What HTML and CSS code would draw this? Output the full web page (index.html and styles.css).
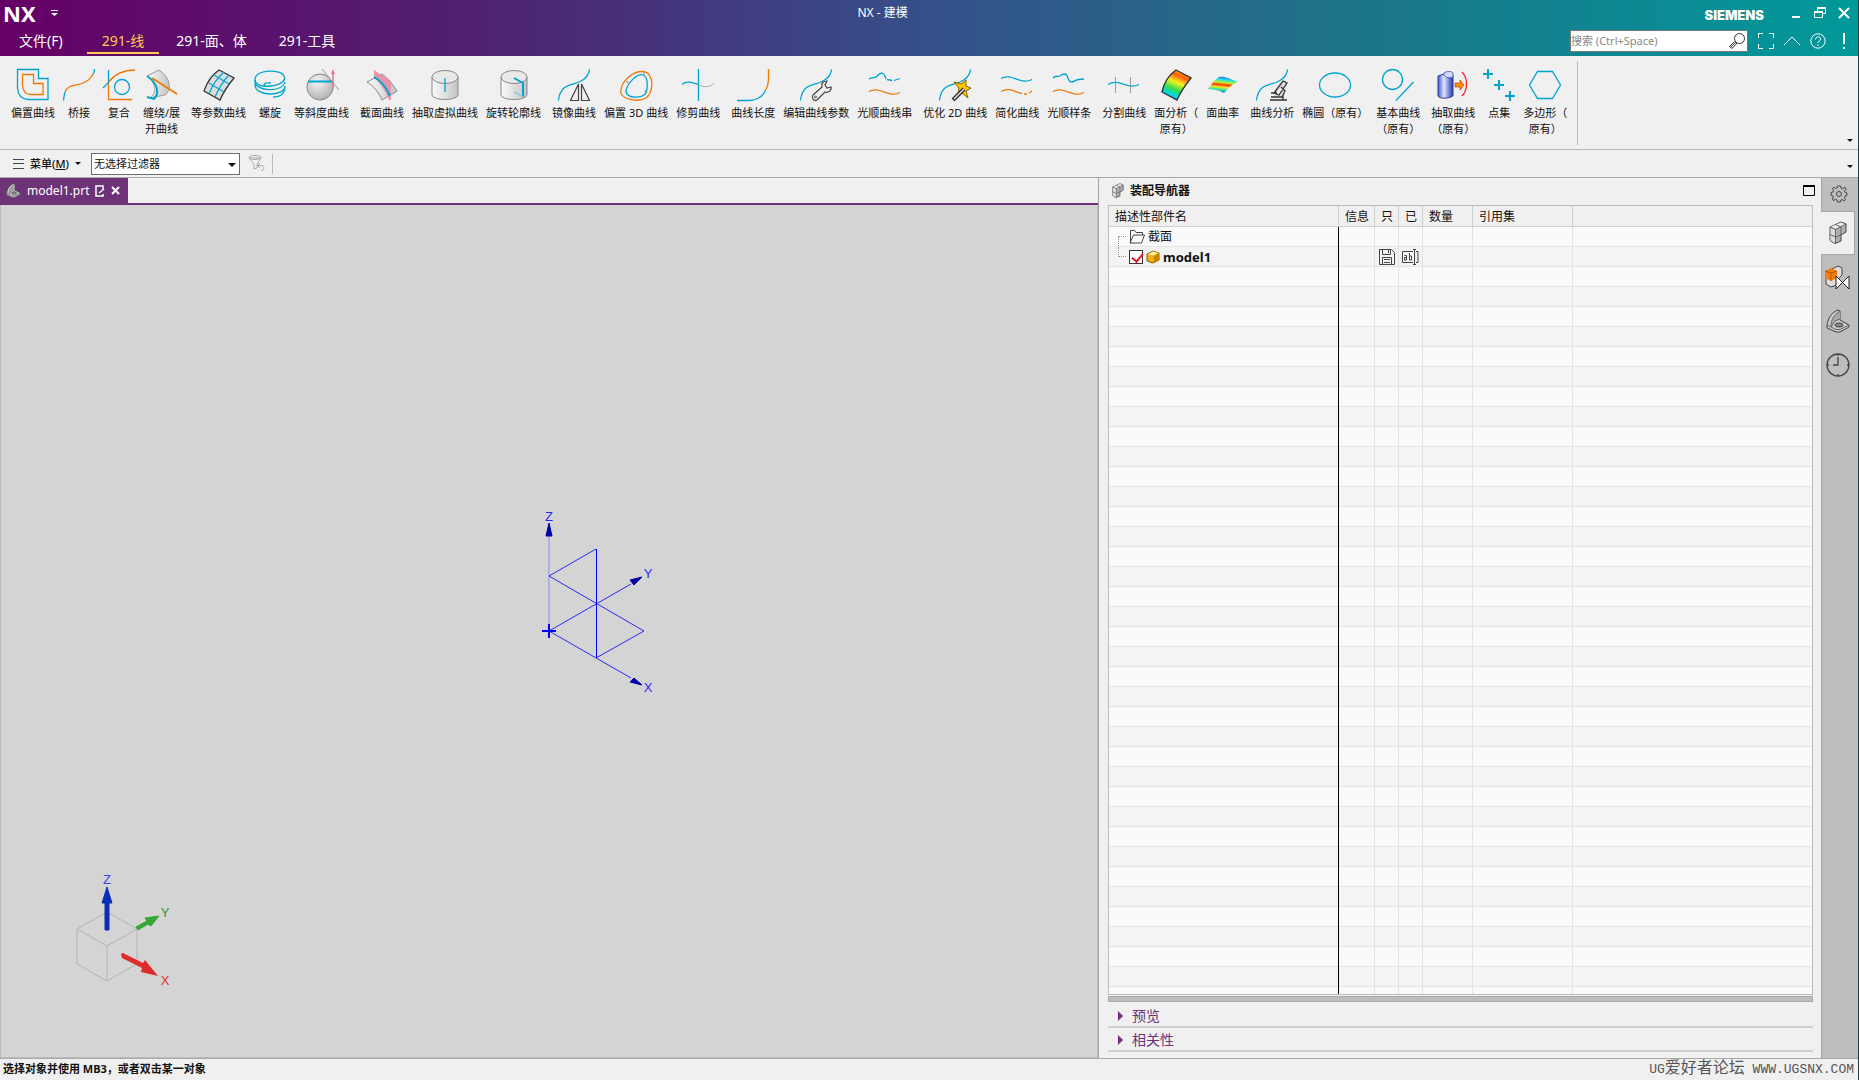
FILE: index.html
```html
<!DOCTYPE html>
<html lang="zh-CN">
<head>
    <meta charset="UTF-8">
    <meta name="viewport" content="width=device-width, initial-scale=1.0">
    <title>NX - 建模</title>
    <link rel="stylesheet" href="styles.css">
</head>
<body>
    <!-- shared shapes -->
    <svg class="defs" width="0" height="0" aria-hidden="true">
        <defs>
            <linearGradient id="metal"><stop offset="0" stop-color="#fafafa"/><stop offset="1" stop-color="#c4c4c4"/></linearGradient>
            <radialGradient id="ball" cx=".4" cy=".3" r=".8"><stop offset="0" stop-color="#f6f6f6"/><stop offset="1" stop-color="#aaa"/></radialGradient>
            <linearGradient id="rainbow" x1=".7" y1="0" x2=".3" y2="1"><stop offset="0" stop-color="#ffd800"/><stop offset=".2" stop-color="#ff5a10"/><stop offset=".42" stop-color="#f6f020"/><stop offset=".65" stop-color="#35dc50"/><stop offset=".85" stop-color="#00d8f0"/><stop offset="1" stop-color="#1060ff"/></linearGradient>
            <linearGradient id="rainbow2" x1=".6" y1="0" x2=".4" y2="1"><stop offset="0" stop-color="#2060ff"/><stop offset=".2" stop-color="#20e8e0"/><stop offset=".36" stop-color="#c0f020"/><stop offset=".5" stop-color="#ff3010"/><stop offset=".64" stop-color="#f0e820"/><stop offset=".82" stop-color="#20e0b0"/><stop offset="1" stop-color="#2050ff"/></linearGradient>
            <linearGradient id="tube"><stop offset="0" stop-color="#4458d0"/><stop offset=".4" stop-color="#dfe6ff"/><stop offset="1" stop-color="#2434b0"/></linearGradient>
            <symbol id="scurve" viewBox="0 0 32 32"><path class="blue" d="M.5 31.5C2 15 14 16 21 13S31 6 31.5.5"/></symbol>
            <symbol id="bracket" viewBox="0 0 24 24">
                <path d="M1 16C2 9 6 3 12 1l2 1v9l9 5v2l-9 5h-4l-9-4z" fill="#c9c9c9" stroke="#444"/>
                <path d="M5 17C5 11 8 6 14 2v8l-5 2z" fill="#a9a9a9"/>
                <path d="M1 16l4 2 4-6 5-2M5 17C5 11 8 6 14 2M23 16l-9 4.500h-4L5 18" fill="none" stroke="#666"/>
                <ellipse cx="13" cy="16" rx="4" ry="2" fill="#888" stroke="#444"/>
            </symbol>
            <symbol id="blocks" viewBox="0 0 18 23">
                <path d="M1 6l11-5 5 2v8l-5 3v6l-6 2.500-5-3z" fill="#b0b0b0" stroke="#444"/>
                <path d="M1.500 6l5 2L16.500 3.500 12 1.500z" fill="#eee"/>
                <path d="M1.500 7L6 8.500V22l-4.500-2.500z" fill="#ddd"/>
                <path d="M1 6l5.500 2.500L17 3M6.500 8v14M12 5.500V14l-5.500 2L1 13.500M6.500 3.500L12 6" fill="none" stroke="#666"/>
            </symbol>
        </defs>
    </svg>

    <header class="titlebar">
        <div class="title-row">
            <div class="brand">NX</div>
            <button class="plain quick" aria-label="快速访问"><svg width="7" height="6"><path d="M0 .5h7" stroke="#fff"/><path d="M0 3h7L3.500 6z" fill="#fff"/></svg></button>
            <h1 class="title">NX - 建模</h1>
            <div class="siemens">SIEMENS</div>
            <div class="window-buttons">
                <button class="plain" aria-label="最小化"><svg width="12" height="12"><path d="M2 10h8" stroke="#fff" stroke-width="2"/></svg></button>
                <button class="plain" aria-label="还原"><svg width="12" height="12" fill="none" stroke="#fff"><path d="M3.500 4V1.500h8v5H9"/><path d="M3 1h9" stroke-width="2"/><path d="M.5 5.500h8v5h-8z"/><path d="M0 5h9" stroke-width="2"/></svg></button>
                <button class="plain" aria-label="关闭"><svg width="12" height="12"><path d="M1 1l10 10M11 1L1 11" stroke="#fff" stroke-width="2"/></svg></button>
            </div>
        </div>
        <div class="menu-row">
            <nav class="menu-tabs">
                <a href="#">文件(F)</a>
                <a href="#" class="active">291-线</a>
                <a href="#">291-面、体</a>
                <a href="#">291-工具</a>
            </nav>
            <div class="search">
                <input type="text" aria-label="搜索" placeholder="搜索 (Ctrl+Space)">
                <svg width="16" height="16" fill="none" stroke="#333"><circle cx="10.500" cy="5.500" r="5"/><path d="M7 9l-5.500 5.500M8 10l-5 5.500-2.500-2L5.500 8.500"/></svg>
            </div>
            <div class="window-tools">
                <button class="plain" aria-label="全屏"><svg width="16" height="16" fill="none" stroke="#fff"><path d="M.5 5V.5H5M11 .5h4.500V5M15.500 11v4.500H11M5 15.500H.5V11"/></svg></button>
                <button class="plain" aria-label="折叠"><svg width="16" height="16" fill="none" stroke="#fff"><path d="M0 12l8-8 8 8"/></svg></button>
                <button class="plain" aria-label="帮助"><svg width="16" height="16" fill="none" stroke="#fff"><circle cx="8" cy="8" r="7.200"/><path d="M5.500 6.500c0-3.500 5-3.500 5-.5 0 2-2.500 2-2.500 4.200M8 11.500V13"/></svg></button>
                <button class="plain" aria-label="提醒"><svg width="4" height="16"><path d="M2 0v11M2 14v2" stroke="#fff" stroke-width="2"/></svg></button>
            </div>
        </div>
    </header>

    <section class="ribbon">
        <div class="group">
            <button class="tool"><svg viewBox="0 0 32 32"><path class="blue" d="M.5.5h21v9h9.500v21H11C4 30 1 26 .5 19z"/><path class="orange" d="M5.500 5.500h11v9H26v11H14c-6 0-8-4-8.500-9z"/></svg>偏置曲线</button>
            <button class="tool"><svg viewBox="0 0 32 32"><path class="orange" d="M2 23c3-8 11-6 18-9 6-2 8-5 10-9"/><path class="blue" d="M.5 31.500C1 28 1 26 2 23M30 5q1.500-2 1.500-5"/></svg>桥接</button>
            <button class="tool"><svg viewBox="0 0 32 32"><path class="orange" d="M5.500 12v18.500H29M5.500 13C12 5 20 1 32 1"/><path class="blue" d="M5.500 1v11M0 19l6-6"/><circle class="blue" cx="19" cy="18" r="7.500"/></svg>复合</button>
            <button class="tool"><svg viewBox="0 0 32 32"><path d="M1 7L13 1c12 8 13 20 6 25L3 29c8-3 8-14-2-22z" fill="url(#metal)" stroke="#999"/><path class="blue thick" d="M1 7c12 8 12 18 7 23l-7-2"/><path class="orange thick" d="M6 9l25 16"/></svg>缠绕/展<br>开曲线</button>
        </div>
        <div class="group">
            <button class="tool"><svg viewBox="0 0 32 32"><path d="M16 1l15 8c-5 6-10 13-14 22L1 22C4 13 9 6 16 1z" fill="#dcdcdc" stroke="#333" stroke-width="1.300"/><path class="blue" d="M21 3C14 9 9 17 6 25M26 6c-6 6-11 15-14 22M11 6l15 9M6 14l15 9"/></svg>等参数曲线</button>
            <button class="tool"><svg viewBox="0 0 32 32"><g class="blue"><path d="M17 14c-9-1-9 4-1 3 12-1 16-6 14-10C27 0 2 0 1 10c-1 11 28 9 30-1"/><path d="M1 11c-2 12 28 13 30 2M1 15c-1 13 30 13 30 2 0 7-4 11-12 11"/></g></svg>螺旋</button>
            <button class="tool"><svg viewBox="0 0 32 32"><circle cx="14" cy="18" r="13" fill="url(#ball)" stroke="#888"/><path class="blue thick" d="M2 12.500h24"/><path d="M16 0l17 21" stroke="#999" fill="none"/><path d="M27 20V4" stroke="#de7890" stroke-width="1.500"/><path d="M27 0l-2 5h4z" fill="#de7890"/></svg>等斜度曲线</button>
        </div>
        <div class="group">
            <button class="tool"><svg viewBox="0 0 32 32"><path d="M1 13L16 5c6 4 11 11 15 17l-15 9C13 24 8 17 1 13z" fill="url(#metal)" stroke="#888"/><path d="M8 1l17 11v19H23C19 21 14 14 8 8z" fill="#e68aa2" opacity=".85"/><path class="blue thick" d="M8 8c7 4 13 12 16 19"/></svg>截面曲线</button>
            <button class="tool"><svg viewBox="0 0 32 32"><path d="M3 8v18c1 6 25 6 26 0V8z" fill="url(#metal)" stroke="#888"/><ellipse cx="16" cy="8" rx="13" ry="6.500" fill="#e9e9e9" stroke="#888"/><path class="blue" d="M16 9v14"/></svg>抽取虚拟曲线</button>
            <button class="tool"><svg viewBox="0 0 32 32"><path d="M3 8v18c1 6 25 6 26 0V8z" fill="url(#metal)" stroke="#888"/><ellipse cx="16" cy="8" rx="13" ry="6.500" fill="#e9e9e9" stroke="#888"/><path class="blue thick" d="M16 9l9 5v14"/><path d="M16 23l9 5" stroke="#8dcbdc" stroke-width="1.500"/></svg>旋转轮廓线</button>
        </div>
        <div class="group">
            <button class="tool"><svg viewBox="0 0 32 32"><use href="#scurve"/><path d="M20.500 15v16.500h-8zM23.500 15v16.500h8z" fill="#eee" stroke="#444" stroke-width="1.200"/></svg>镜像曲线</button>
            <button class="tool"><svg viewBox="0 0 32 32"><path class="orange" d="M1 20C3 11 13 2 23 2.500c12 1 11 23 2 27C18 33-2 31 1 20z"/><path class="blue" d="M6 21C8 14 17 4 23 6c6 2 5 17 1 20-4 3-19 4-18-5z"/><path d="M24 3v3M6 12l3 2M25 21l2 3" stroke="#888"/></svg>偏置 3D 曲线</button>
            <button class="tool"><svg viewBox="0 0 32 32"><path class="blue" d="M16.500 0v32M0 15.500c5-4 10-2 16 0"/><path d="M16 15.500c6 3 11 3 16-1" fill="none" stroke="#aaa"/></svg>修剪曲线</button>
        </div>
        <div class="group">
            <button class="tool"><svg viewBox="0 0 32 32"><path class="blue" d="M0 31.500h11c9 0 15-4 18-11"/><path class="orange" d="M31.500 0v10q0 6-2.500 10.500"/></svg>曲线长度</button>
            <button class="tool"><svg viewBox="0 0 32 32"><use href="#scurve"/><path d="M13 26l9-8c-1-4 1-6 5-6l-2 4 2 3 4-1c1 4-3 6-6 5l-8 8c-3 2-6-2-4-5z" fill="#eee" stroke="#444" stroke-width="1.200"/><circle cx="15.500" cy="28" r="1" fill="none" stroke="#555"/></svg>编辑曲线参数</button>
            <button class="tool"><svg viewBox="0 0 32 32"><path class="blue" d="M0 10c3-2 5-1 7-2s3-4 6-4c3 1 3 4 4 6M18 10.500l5 1M25 11.500l6-2"/><path class="orange" d="M0 22.500c10-6 20 7 31 1"/></svg>光顺曲线串</button>
        </div>
        <div class="group">
            <button class="tool"><svg viewBox="0 0 32 32"><use href="#scurve"/><path d="M15 13l7 2 5-4v6l5 2-5 3 2 7-6-5-4 1 1-6z" fill="#ffc400" stroke="#8a6100"/><path d="M14 31l11-11" stroke="#333" stroke-width="4"/><path d="M15 30l10-10" stroke="#ddd" stroke-width="1.500"/></svg>优化 2D 曲线</button>
            <button class="tool"><svg viewBox="0 0 32 32"><path class="blue" d="M0 9.500c10-6 20 7 31 1"/><path class="orange" d="M0 22.500c9-5 14 1 21 2M23 25h3M28 24l3-2"/></svg>简化曲线</button>
            <button class="tool"><svg viewBox="0 0 32 32"><path class="blue" d="M0 9c3-3 5-1 7-2s2-2 5-2c4 1 2 8 7 8 3 0 2-3 12-3"/><path class="orange" d="M0 22.500c10-6 20 7 31 1"/></svg>光顺样条</button>
        </div>
        <div class="group">
            <button class="tool"><svg viewBox="0 0 32 32"><path class="blue" d="M0 15.500c11-7 19 6 31 0"/><path d="M7.500 8v16M22.500 8v16" stroke="#999"/></svg>分割曲线</button>
            <button class="tool"><svg viewBox="0 0 32 32"><path d="M16 1l15 8c-5 6-10 13-14 22L2 23C4 13 9 6 16 1z" fill="url(#rainbow)" stroke="#333" stroke-width="1.400"/></svg>面分析（<br>原有）</button>
            <button class="tool"><svg viewBox="0 0 32 32"><path d="M12 8c6-1 11 2 19 5-5 1-9 6-14 11-6-3-11-4-16-4 4-5 6-9 11-12z" fill="url(#rainbow2)"/></svg>面曲率</button>
        </div>
        <div class="group">
            <button class="tool"><svg viewBox="0 0 32 32"><use href="#scurve"/><path d="M14 31h17M17 28h9l3-6-4-4M18 24l9-12 4 2-8 12-5-2zM15 24h6M15 28h5M27 31v-5" fill="#ddd" stroke="#333" stroke-width="1.300"/></svg>曲线分析</button>
            <button class="tool"><svg viewBox="0 0 32 32"><ellipse class="blue" cx="16" cy="16" rx="15.500" ry="12"/></svg>椭圆（原有）</button>
            <button class="tool"><svg viewBox="0 0 32 32"><circle class="blue" cx="10.500" cy="10.500" r="10"/><path class="blue" d="M14 31.500L31.500 13"/></svg>基本曲线<br>（原有）</button>
        </div>
        <div class="group">
            <button class="tool"><svg viewBox="0 0 32 32"><path d="M1 7l6-2c1 2 3 3 9 1v21c-5 3-13 3-15 0z" fill="url(#tube)" stroke="#2c3c9c"/><path d="M7 4c2-2 8-2 9 0v4c-4 2-8 0-9-2z" fill="#cfd8ff" stroke="#2c3c9c" stroke-width=".7"/><path d="M18 14h5v-3l4 5-4 5v-3h-5z" fill="#ff8a00" stroke="#b04800" stroke-width=".7"/><path d="M25 3c6 6 6 18 0 24" fill="none" stroke="#f22" stroke-width="1.300"/></svg>抽取曲线<br>（原有）</button>
            <button class="tool"><svg viewBox="0 0 32 32"><path class="cross" d="M0 5h10M5 0v10M11 16h10M16 11v10M22 27h10M27 22v10"/></svg>点集</button>
            <button class="tool"><svg viewBox="0 0 32 32"><path class="blue" d="M8.500 2.500h15l8 13.500-8 13.500h-15L.5 16z"/></svg>多边形（<br>原有）</button>
        </div>
        <div class="divider"></div>
        <button class="plain overflow" aria-label="更多命令"></button>
    </section>

    <section class="toolbar">
        <button class="menu-button"><svg width="11" height="10"><path d="M0 .5h11M0 4.500h11M0 9.500h11" stroke="#444"/></svg><span>菜单(<u>M</u>)</span><i class="caret"></i></button>
        <div class="filter">
            <select aria-label="选择过滤器"><option>无选择过滤器</option></select>
            <i class="caret"></i>
        </div>
        <button class="plain" aria-label="重置过滤器"><svg width="17" height="17" fill="none" stroke="#aaa"><path d="M1 3l5 6v5l3-1V9l4-6z"/><ellipse cx="7" cy="2.500" rx="6" ry="2"/><path d="M12 8l-2.500 2.500L12 13M10 10.500h3c4 0 4 5 0 5"/></svg></button>
        <div class="divider"></div>
        <button class="plain overflow" aria-label="更多工具"></button>
    </section>

    <main class="workspace">
        <section class="document">
            <div class="doc-tabs">
                <div class="doc-tab">
                    <svg width="15" height="15"><use href="#bracket"/></svg>
                    <span>model1.prt</span>
                    <svg width="10" height="12" fill="none" stroke="#fff" stroke-width="1.500"><path d="M8 4V1H1v10h7V9M3 1h4"/><path d="M4 8l5-4"/></svg>
                    <button class="plain" aria-label="关闭标签"><svg width="9" height="9"><path d="M1 1l7 7M8 1L1 8" stroke="#fff" stroke-width="2"/></svg></button>
                </div>
            </div>
            <div class="viewport">
                <!-- datum csys, origin in the middle of the view -->
                <svg class="csys" viewBox="-130 -130 260 260">
                    <g fill="none" stroke="#2a2af5">
                        <path d="M0 0v-96" stroke="#8d8df0"/>
                        <path d="M0 0l82-47M0 0l82 47M0-55l47-27M0-55L95 0 47 27"/>
                        <path d="M47.500-82V27" stroke="#00f"/>
                    </g>
                    <path d="M-7 0H7M0-7V7" stroke="#00f" stroke-width="2"/>
                    <path d="M0-108l3 13h-6zM93-54l-8 8-4-5zM93 54l-8-7-4 4z" fill="#0000a8" stroke="#0000a8"/>
                    <g class="axis-text" fill="#2a2af5"><text x="0" y="-110">Z</text><text x="99" y="-53">Y</text><text x="99" y="61">X</text></g>
                </svg>
                <!-- view triad -->
                <svg class="triad" viewBox="0 0 110 120">
                    <path d="M37 42l30 17v35l-30 17-30-17V59zM7 59l30 17 30-17M37 76v35" fill="none" stroke="#b4b4b4"/>
                    <path d="M35 60V33h-3l5-16 5 16h-3v27z" fill="#0a2fb5" stroke="#0a2fb5"/>
                    <path d="M66 57l11-6-2-3 14-2-8 10-3-2-10 6z" fill="#36a836" stroke="#36a836"/>
                    <path d="M53 83l20 10 2-3 13 16-17-4 1-4-20-10q-2-5 1-5z" fill="#dc2c2c"/>
                    <g class="axis-text"><text x="37" y="14" fill="#4040ff">Z</text><text x="95" y="47" fill="#329832">Y</text><text x="95" y="115" fill="#e03030">X</text></g>
                </svg>
            </div>
        </section>

        <aside class="navigator">
            <div class="panel-head">
                <svg width="12" height="15"><use href="#blocks"/></svg>
                <h2>装配导航器</h2>
                <button class="plain" aria-label="最大化"><svg width="12" height="11"><path d="M.5 1v9.500h11V1" fill="none" stroke="#000"/><path d="M0 1h12" stroke="#000" stroke-width="2"/></svg></button>
            </div>
            <div class="grid">
                <table>
                    <colgroup><col class="c-name"><col class="c-info"><col class="c-flag"><col class="c-flag"><col class="c-count"><col class="c-ref"><col></colgroup>
                    <thead>
                        <tr><th>描述性部件名</th><th>信息</th><th>只</th><th>已</th><th>数量</th><th>引用集</th><th></th></tr>
                    </thead>
                    <tbody id="rows">
                        <tr>
                            <td><div class="node"><i class="branch"></i><svg width="16" height="14" fill="none" stroke="#444"><path d="M1.500 13V.5h4l1.500 2h6.500V5M1 13L4.500 5h11l-3 8z"/></svg><span>截面</span></div></td>
                            <td></td><td></td><td></td><td></td><td></td><td></td>
                        </tr>
                        <tr>
                            <td><div class="node"><i class="branch up"></i><input type="checkbox" checked aria-label="model1"><svg width="14" height="14"><path d="M1 4l6-3 6 2v7l-6 3-6-2z" fill="#f0b010" stroke="#8a5a00"/><path d="M1.500 4.500l6 1 5-2.500-5.500-1.500z" fill="#fff0a0"/><path d="M8 6l5-3v7l-5 3z" fill="#c88400"/></svg><b>model1</b></div></td>
                            <td></td>
                            <td class="mark"><svg width="16" height="16" fill="none" stroke="#444"><path d="M.5.5h12l3 3v12H.5zM3.500.5v5h8v-5M9.500 1v3M3.500 15V8.500h9V15M5 10.500h6M5 13.500h6"/></svg></td>
                            <td class="mark"><svg width="17" height="16" fill="none" stroke="#444"><path d="M11 2.500H.5v11H11M14 2.500h2v11h-2M12.500.5v15M11 .5h3M11 15.500h3"/><path d="M2.500 6.500h2v4.500h-2V8.500h2M7.500 4v7h2V7h-2"/></svg></td>
                            <td></td><td></td><td></td>
                        </tr>
                    </tbody>
                </table>
            </div>
            <div class="splitter"></div>
            <button class="fold">预览</button>
            <button class="fold">相关性</button>
        </aside>

        <nav class="side-tabs">
            <button class="side-tab gear" aria-label="设置"><svg width="18" height="18" viewBox="-9 -9 18 18" fill="none" stroke="#444"><circle r="2.500"/><path d="M-1.500-8h3l.5 2 1.500.6L6.200-6.500 7-4.500 5.500-3 6-1.500l2 .5v2.500L6 2 5.500 3.500 6.500 5.500 5 6.800 3.300 5.500 2 6l-.5 2h-3L-2 6l-1.500-.6-2 1.100L-6.800 5l1.300-1.700L-6 2l-2-.5v-3L-6-2l.5-1.500-1-2L-5-6.800l1.700 1.300L-2-6z"/></svg></button>
            <button class="side-tab current" aria-label="装配导航器"><svg width="18" height="23"><use href="#blocks"/></svg></button>
            <button class="side-tab" aria-label="约束导航器"><svg width="25" height="24"><path d="M7 4l6-3 4 2v7l-5 5v5l-6 2-5-3V6z" fill="#ddd" stroke="#444"/><path d="M0 6l6-3 6 3v7l-6 3-6-3z" fill="#f08010"/><path d="M0 6l6 2 6-2M6 8v8" stroke="#c05000" fill="none"/><path d="M11 11v13l13-13v13z" fill="#fff" stroke="#222"/></svg></button>
            <button class="side-tab" aria-label="部件导航器"><svg width="24" height="24"><use href="#bracket"/></svg></button>
            <button class="side-tab" aria-label="历史记录"><svg width="24" height="24" fill="none" stroke="#444" stroke-width="1.300"><circle cx="12" cy="12" r="11"/><path d="M12 4v8H7M12 1v2M12 21v2M1 12h2M21 12h2"/></svg></button>
        </nav>
    </main>

    <footer class="status">
        <span class="hint">选择对象并使用 MB3，或者双击某一对象</span>
        <span class="forum">UG<span class="cjk">爱好者论坛</span> WWW.UGSNX.COM</span>
    </footer>

    <script>
        // empty rows that fill up the navigator
        var rows = document.getElementById("rows");
        for (var i = 0; i < 60; i++) {
            var tr = rows.insertRow();
            for (var j = 0; j < 7; j++) {
                tr.insertCell();
            }
        }
    </script>
</body>
</html>
```
FILE: styles.css
```css
* {
    box-sizing: border-box;
}

body {
    display: flex;
    flex-direction: column;
    height: 100vh;
    margin: 0;
    overflow: hidden;
    border-right: 1px solid #1d3a40;
    background: #f0f0f0;
    color: #111;
    font-family: "Noto Sans", "Noto Sans CJK SC", sans-serif;
    font-size: 11px;
    line-height: 16px;
    text-spacing-trim: space-all;
}

button, input, select {
    font: inherit;
    color: inherit;
}

svg {
    display: block;
    flex: none;
}

.defs {
    position: absolute;
}

.plain {
    display: block;
    padding: 0;
    border: none;
    background: none;
}

.divider {
    width: 1px;
    background: #bbb;
}

.caret, .overflow::after {
    content: "";
    display: block;
    border: 3px solid transparent;
    border-top-color: #111;
    border-bottom: none;
}

.overflow {
    margin-left: auto;
}

/* title bar */
.titlebar {
    height: 56px;
    flex: none;
    color: #fff;
    background: linear-gradient(90deg, #660066 0%, #502070 25%, #35508a 50%, #207088 70%, #009999 100%);
}

.title-row {
    position: relative;
    display: flex;
    align-items: center;
    height: 25px;
    padding: 0 8px 0 3px;
}

.brand {
    padding-right: 5px;
    border-right: 1px solid #44206c;
    font: bold 22px/20px "Noto Sans", sans-serif;
}

.quick {
    margin-left: 9px;
}

.title {
    position: absolute;
    left: 0;
    right: 5%;
    margin: 0;
    font-size: 12px;
    font-weight: normal;
    text-align: center;
}

.siemens {
    margin: 4px 26px 0 auto;
    font: 900 13px/20px Inter, sans-serif;
}

.window-buttons {
    display: flex;
    gap: 12px;
}

.menu-row {
    display: flex;
    align-items: center;
    height: 31px;
    padding-right: 12px;
}

.menu-tabs {
    display: flex;
    align-self: stretch;
    gap: 2px;
    margin-right: auto;
    padding-left: 5px;
    font-size: 14px;
    line-height: 31px;
}

.menu-tabs a {
    height: 29px;
    padding: 0 15px;
    color: #fff;
    text-decoration: none;
}

.menu-tabs a:first-child {
    padding: 0 22px 0 14px;
}

.menu-tabs .active {
    border-bottom: 2px solid #ffcc4d;
    color: #ffcc4d;
}

.search {
    display: flex;
    align-items: center;
    width: 178px;
    height: 22px;
    padding-right: 2px;
    border: 1px solid #777;
    background: #fff;
}

.search input {
    flex: 1;
    min-width: 0;
    padding: 0;
    border: none;
    outline: none;
    background: none;
    color: #222;
}

.search input::placeholder {
    color: #888;
}

.window-tools {
    display: flex;
    gap: 10px;
    margin-left: 10px;
}

.window-tools .plain:last-child {
    margin-left: 6px;
}

/* ribbon */
.ribbon {
    display: flex;
    flex: none;
    gap: 3px;
    height: 94px;
    padding-left: 7px;
    border-bottom: 1px solid #b9b9b9;
}

.group {
    display: flex;
    align-items: flex-start;
}

.tool {
    display: flex;
    flex-direction: column;
    align-items: center;
    min-width: 40px;
    padding: 13px 4px 0;
    border: none;
    background: none;
    text-align: center;
    white-space: nowrap;
}

.tool svg {
    width: 32px;
    height: 32px;
    margin-bottom: 4px;
    overflow: visible;
}

.blue {
    fill: none;
    stroke: #00a5cf;
    stroke-width: 1.3;
}

.orange {
    fill: none;
    stroke: #ec7a08;
    stroke-width: 1.3;
}

.thick {
    stroke-width: 2;
}

.cross {
    fill: none;
    stroke: #00a5cf;
    stroke-width: 2;
}

.ribbon .divider {
    margin: 5px 0 4px 3px;
}

.ribbon .overflow {
    align-self: flex-end;
    margin-right: 5px;
    padding-bottom: 7px;
}

/* selection bar */
.toolbar {
    display: flex;
    flex: none;
    align-items: center;
    height: 28px;
    padding: 0 5px 0 13px;
    border-bottom: 1px solid #a9a9a9;
}

.toolbar .overflow {
    padding-top: 6px;
}

.menu-button {
    display: flex;
    align-items: center;
    gap: 6px;
    margin-right: 10px;
    padding: 0;
    border: none;
    background: none;
    font-weight: 500;
}

.filter {
    position: relative;
    width: 149px;
    margin-right: 8px;
}

.filter select {
    display: block;
    appearance: none;
    width: 100%;
    height: 22px;
    padding: 0 2px;
    border: 1px solid #6e6e6e;
    border-radius: 0;
    background: #fff;
}

.filter .caret {
    position: absolute;
    right: 4px;
    top: 10px;
    border-width: 4px 4px 0;
    pointer-events: none;
}

.toolbar .divider {
    height: 20px;
    margin-left: 7px;
}

/* work area */
.workspace {
    display: flex;
    flex: 1;
    min-height: 0;
}

.document {
    display: flex;
    flex: 1;
    flex-direction: column;
    min-width: 0;
}

.doc-tabs {
    display: flex;
    height: 27px;
    border-bottom: 2px solid #6e3278;
}

.doc-tab {
    display: flex;
    align-items: center;
    gap: 6px;
    padding: 0 8px 0 6px;
    background: #6e3278;
    color: #fff;
    font-size: 12px;
}

.viewport {
    position: relative;
    flex: 1;
    border: solid #bcbcbc;
    border-width: 0 1px 1px;
    background: #d4d4d4;
}

.csys {
    position: absolute;
    left: calc(50% - 130px);
    top: calc(50% - 130px);
    width: 260px;
    height: 260px;
}

.triad {
    position: absolute;
    left: 69px;
    bottom: 67px;
    width: 110px;
    height: 120px;
}

.axis-text {
    font: 13px "Liberation Sans", sans-serif;
    text-anchor: middle;
}

/* assembly navigator */
.navigator {
    display: flex;
    flex: none;
    flex-direction: column;
    width: 723px;
    padding: 0 8px 6px 9px;
    border-left: 1px solid #a5a5a5;
}

.panel-head {
    display: flex;
    align-items: center;
    height: 27px;
    padding: 0 0 2px 4px;
}

.panel-head h2 {
    margin: 0 auto 0 6px;
    font-size: 12px;
    font-weight: 600;
}

.panel-head .plain {
    margin-right: -2px;
}

.grid {
    flex: 1;
    min-height: 0;
    overflow: hidden;
    border: 1px solid #bbb;
    background: #fafafa;
}

table {
    width: 100%;
    table-layout: fixed;
    border-collapse: separate;
    border-spacing: 0;
    font-size: 12px;
}

.c-name { width: 230px; }
.c-info { width: 36px; }
.c-flag { width: 24px; }
.c-count { width: 50px; }
.c-ref { width: 100px; }

th, td {
    height: 20px;
    padding: 0;
    border-right: 1px solid #e4e4e4;
    border-bottom: 1px solid #e4e4e4;
    text-align: left;
    white-space: nowrap;
}

th {
    height: 21px;
    padding: 2px 0 0 6px;
    border-color: #cfcfcf;
    background: #f0f0f0;
    font-weight: normal;
}

tbody tr:nth-child(even) {
    background: #f4f4f4;
}

/* black line after the name column */
td:nth-child(2) {
    box-shadow: -1px 0 #000;
}

th:last-child, td:last-child {
    border-right: none;
}

.node {
    display: flex;
    align-items: center;
    gap: 3px;
    height: 19px;
    padding-left: 9px;
}

.node b {
    font-size: 13px;
}

.branch {
    align-self: flex-end;
    width: 8px;
    height: 10px;
    border-top: 1px dotted #999;
    border-left: 1px dotted #999;
}

.branch.up {
    align-self: flex-start;
    border-top: none;
    border-bottom: 1px dotted #999;
}

.node input {
    appearance: none;
    width: 14px;
    height: 14px;
    margin: 0;
    border: 1px solid #333;
    background: #fff;
}

.node input:checked::after {
    content: "";
    display: block;
    width: 5px;
    height: 9px;
    margin: 0 4px;
    border: solid #e8112d;
    border-width: 0 2px 2px 0;
    transform: rotate(40deg);
}

.mark svg {
    margin: 0 auto;
}

.splitter {
    height: 6px;
    margin: 1px 0 2px;
    border: 1px solid #aaa;
    background: #bdbdbd;
}

.fold {
    display: flex;
    align-items: center;
    gap: 9px;
    height: 24px;
    padding: 2px 0 0 10px;
    border: none;
    border-bottom: 2px solid #d0d0d0;
    background: none;
    color: #6e3278;
    font-size: 14px;
}

.fold::before {
    content: "";
    border: 5px solid transparent;
    border-left-color: #6e3278;
    border-right: none;
}

/* resource bar */
.side-tabs {
    display: flex;
    flex: none;
    flex-direction: column;
    width: 37px;
    border-left: 1px solid #a5a5a5;
    background: #bebebe;
}

.side-tab {
    display: flex;
    align-items: center;
    justify-content: center;
    height: 44px;
    padding: 0 5px 1px 0;
    border: none;
    background: none;
}

.side-tab.gear {
    height: 33px;
    padding: 0 3px 2px 0;
}

.side-tab.current {
    width: 34px;
    margin-left: -1px;
    padding: 0 0 2px;
    border: 1px solid #a5a5a5;
    border-left: none;
    background: #f0f0f0;
}

/* status bar */
.status {
    display: flex;
    flex: none;
    align-items: center;
    justify-content: space-between;
    height: 22px;
    padding: 0 4px 1px 3px;
    border-top: 1px solid #a9a9a9;
}

.hint {
    font-weight: bold;
}

.forum {
    color: #555;
    font: 13px/16px "Liberation Mono", "Noto Sans CJK SC", monospace;
}

.cjk {
    font-size: 16px;
}
```
